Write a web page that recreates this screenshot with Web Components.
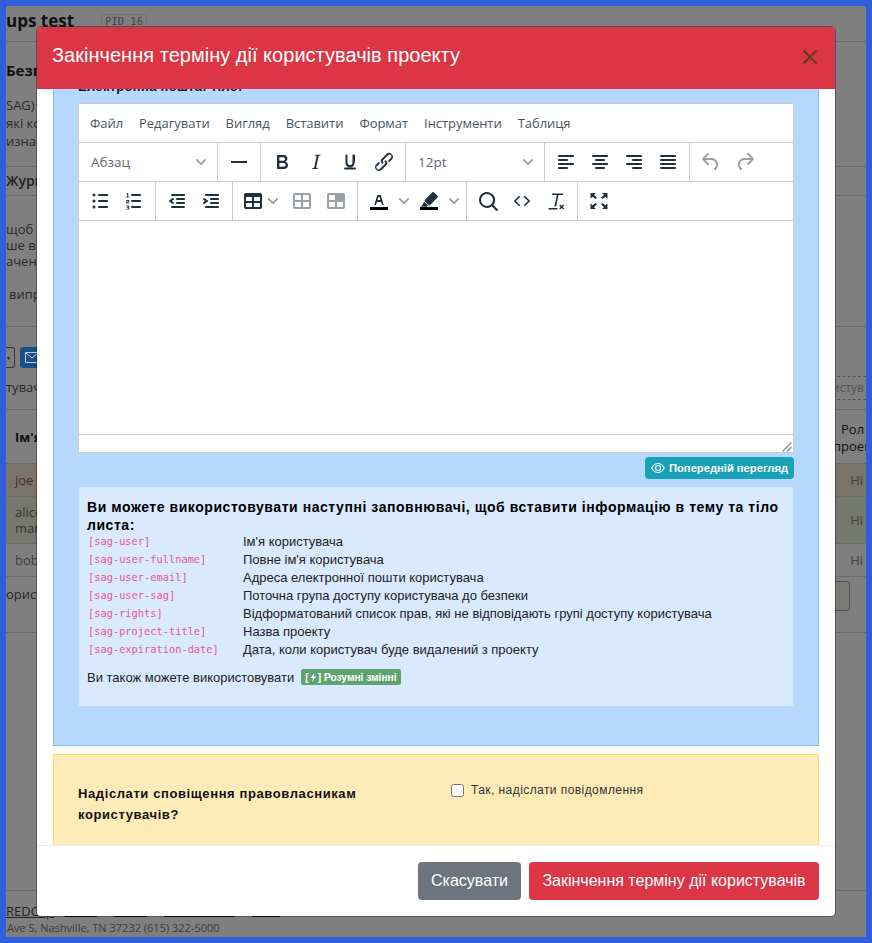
<!DOCTYPE html>
<html lang="uk"><head><meta charset="utf-8"><title>Modal</title>
<style>
html,body{margin:0;height:100%;background:#2f5fdb;overflow:hidden}
body{width:872px;height:943px;position:relative;font-family:"Liberation Sans",Arial,sans-serif}
</style></head><body>
<bg-page></bg-page>
<expire-modal></expire-modal>
<script>
const ICONS={
bold:'<path d="M7.8 19c-.3 0-.5 0-.6-.2l-.2-.5V5.7c0-.2 0-.4.2-.5l.6-.2h5c1.5 0 2.7.3 3.5 1 .7.6 1.1 1.4 1.1 2.5a3 3 0 0 1-.6 1.9c-.4.6-1 1-1.6 1.2.4.1.9.3 1.3.6s.8.7 1 1.2c.4.4.5 1 .5 1.6 0 1.3-.4 2.3-1.3 3-.8.7-2.1 1-3.8 1H7.8zm5-8.3c.6 0 1.2-.1 1.6-.5.4-.3.6-.7.6-1.3 0-1.1-.8-1.7-2.3-1.7H9.3v3.5h3.4zm.5 6c.7 0 1.3-.1 1.7-.4.4-.4.6-.9.6-1.5s-.2-1-.7-1.4c-.4-.3-1-.4-2-.4H9.4v3.8h4z"/>',
italic:'<path d="M16.7 4.7l-.1.9h-.3c-.6 0-1 0-1.4.3-.3.3-.4.6-.5 1.1l-2.1 9.8v.6c0 .5.4.8 1.4.8h.2l-.2.8H8l.2-.8h.2c1.1 0 1.8-.5 2-1.5l2-9.8.1-.5c0-.6-.4-.8-1.4-.8h-.3l.2-.9h5.8z"/>',
underline:'<path d="M16 5c.6 0 1 .4 1 1v5.5a4 4 0 0 1-.4 1.8l-.1.2a4.5 4.5 0 0 1-9 0V6c0-.6.4-1 1-1s1 .4 1 1v7a2.5 2.5 0 0 0 5 0V6c0-.6.4-1 1-1z" transform="translate(0 -.4)"/><path d="M7 17.5h10a1 1 0 0 1 0 2H7a1 1 0 0 1 0-2z"/>',
link:'<path d="M6.2 12.3a1 1 0 0 1 1.4 1.4l-2.1 2a2 2 0 1 0 2.7 2.8l4.8-4.8a1 1 0 0 0 0-1.4 1 1 0 1 1 1.4-1.3 2.9 2.9 0 0 1 0 4L9.6 20a3.9 3.9 0 0 1-5.5-5.5l2-2zm11.6-.6a1 1 0 0 1-1.4-1.4l2-2a2 2 0 1 0-2.6-2.8L11 10.3a1 1 0 0 0 0 1.4A1 1 0 1 1 9.6 13a2.9 2.9 0 0 1 0-4L14.4 4a3.9 3.9 0 0 1 5.5 5.5l-2 2z"/>',
hr:'<path d="M4 11h16v2H4z"/>',
left:'<path d="M5 5h14c.6 0 1 .4 1 1s-.4 1-1 1H5a1 1 0 1 1 0-2zm0 4h8c.6 0 1 .4 1 1s-.4 1-1 1H5a1 1 0 1 1 0-2zm0 8h8c.6 0 1 .4 1 1s-.4 1-1 1H5a1 1 0 0 1 0-2zm0-4h14c.6 0 1 .4 1 1s-.4 1-1 1H5a1 1 0 0 1 0-2z"/>',
center:'<path d="M5 5h14c.6 0 1 .4 1 1s-.4 1-1 1H5a1 1 0 1 1 0-2zm3 4h8c.6 0 1 .4 1 1s-.4 1-1 1H8a1 1 0 1 1 0-2zm0 8h8c.6 0 1 .4 1 1s-.4 1-1 1H8a1 1 0 0 1 0-2zm-3-4h14c.6 0 1 .4 1 1s-.4 1-1 1H5a1 1 0 0 1 0-2z"/>',
right:'<path d="M5 5h14c.6 0 1 .4 1 1s-.4 1-1 1H5a1 1 0 1 1 0-2zm6 4h8c.6 0 1 .4 1 1s-.4 1-1 1h-8a1 1 0 0 1 0-2zm0 8h8c.6 0 1 .4 1 1s-.4 1-1 1h-8a1 1 0 0 1 0-2zm-6-4h14c.6 0 1 .4 1 1s-.4 1-1 1H5a1 1 0 0 1 0-2z"/>',
justify:'<path d="M5 5h14c.6 0 1 .4 1 1s-.4 1-1 1H5a1 1 0 1 1 0-2zm0 4h14c.6 0 1 .4 1 1s-.4 1-1 1H5a1 1 0 1 1 0-2zm0 4h14c.6 0 1 .4 1 1s-.4 1-1 1H5a1 1 0 0 1 0-2zm0 4h14c.6 0 1 .4 1 1s-.4 1-1 1H5a1 1 0 0 1 0-2z"/>',
undo:'<path d="M6.4 8H12c3.7 0 6.2 2 6.8 5.1.6 2.7-.4 5.6-2.3 6.8a1 1 0 0 1-1-1.8c1.1-.6 1.8-2.7 1.4-4.6-.5-2.1-2.1-3.5-4.9-3.5H6.4l3.3 3.3a1 1 0 1 1-1.4 1.4l-5-5a1 1 0 0 1 0-1.4l5-5a1 1 0 0 1 1.4 1.4L6.4 8z"/>',
redo:'<path d="M17.6 10H12c-2.8 0-4.4 1.4-4.9 3.5-.4 2 .3 4 1.4 4.6a1 1 0 1 1-1 1.8c-2-1.2-2.9-4.1-2.3-6.8.6-3 3-5.1 6.8-5.1h5.6l-3.3-3.3a1 1 0 1 1 1.4-1.4l5 5a1 1 0 0 1 0 1.4l-5 5a1 1 0 0 1-1.4-1.4l3.3-3.3z"/>',
ul:'<path d="M11 5h8c.6 0 1 .4 1 1s-.4 1-1 1h-8a1 1 0 0 1 0-2zm0 6h8c.6 0 1 .4 1 1s-.4 1-1 1h-8a1 1 0 0 1 0-2zm0 6h8c.6 0 1 .4 1 1s-.4 1-1 1h-8a1 1 0 0 1 0-2z"/><circle cx="6" cy="6" r="1.5"/><circle cx="6" cy="12" r="1.5"/><circle cx="6" cy="18" r="1.5"/>',
ol:'<path d="M10 17h8c.6 0 1 .4 1 1s-.4 1-1 1h-8a1 1 0 0 1 0-2zm0-6h8c.6 0 1 .4 1 1s-.4 1-1 1h-8a1 1 0 0 1 0-2zm0-6h8c.6 0 1 .4 1 1s-.4 1-1 1h-8a1 1 0 1 1 0-2z"/><path d="M5 4h1.2v3.5H7.200V8.500H4.300V7.500H5.200V5H4.500zM4.300 11h2.900v2.200H5.300v.5h1.900v.8H4.300V12.500H6.200V11.900H4.300zM4.300 16.500h2.900v4H4.300v-.8h1.900v-.8H4.800v-.7h1.400v-.8H4.300z"/>',
outdent:'<path d="M7 5h12c.6 0 1 .4 1 1s-.4 1-1 1H7a1 1 0 1 1 0-2zm5 4h7c.6 0 1 .4 1 1s-.4 1-1 1h-7a1 1 0 0 1 0-2zm0 4h7c.6 0 1 .4 1 1s-.4 1-1 1h-7a1 1 0 0 1 0-2zm-5 4h12a1 1 0 0 1 0 2H7a1 1 0 0 1 0-2zm1.600-3.800a1 1 0 0 1-1.200 1.600l-3-2a1 1 0 0 1 0-1.600l3-2a1 1 0 0 1 1.200 1.600L6.800 12l1.800 1.200z"/>',
indent:'<path d="M7 5h12c.6 0 1 .4 1 1s-.4 1-1 1H7a1 1 0 1 1 0-2zm5 4h7c.6 0 1 .4 1 1s-.4 1-1 1h-7a1 1 0 0 1 0-2zm0 4h7c.6 0 1 .4 1 1s-.4 1-1 1h-7a1 1 0 0 1 0-2zm-5 4h12a1 1 0 0 1 0 2H7a1 1 0 0 1 0-2zm-2.600-3.800L6.200 12l-1.800-1.200a1 1 0 0 1 1.200-1.600l3 2a1 1 0 0 1 0 1.600l-3 2a1 1 0 1 1-1.200-1.600z"/>',
table:'<path d="M19 4a2 2 0 0 1 2 2v12a2 2 0 0 1-2 2H5a2 2 0 0 1-2-2V6c0-1.100.9-2 2-2h14zM5 14v4h6v-4H5zm14 0h-6v4h6v-4zm0-6h-6v4h6V8zM5 12h6V8H5v4z"/>',
cell:'<path fill-rule="evenodd" d="M19 4a2 2 0 0 1 2 2v12a2 2 0 0 1-2 2H5a2 2 0 0 1-2-2V6c0-1.100.9-2 2-2h14zm-8 9H5v5h6v-5zm8 0h-6v5h6v-5zm0-7h-6v5h6V6zm-8 0H5v5h6V6z"/>',
row:'<path fill-rule="evenodd" d="M19 4a2 2 0 0 1 2 2v12a2 2 0 0 1-2 2H5a2 2 0 0 1-2-2V6c0-1.100.9-2 2-2h14zm-8 9H5v5h6v-5zm8 0h-6v5h6v-5zm-8-7H5v5h6V6z"/>',
textcolor:'<path d="M3 18h18v3H3z" fill="#000"/><path d="M8.700 16h-.8a.5.5 0 0 1-.5-.6l2.700-9c.1-.3.3-.4.5-.4h2.800c.2 0 .4.100.5.400l2.700 9a.5.5 0 0 1-.5.600h-.8a.5.5 0 0 1-.4-.4l-.7-2.200c0-.3-.3-.4-.5-.4h-3.400c-.2 0-.4.100-.5.400l-.7 2.200c0 .3-.2.400-.4.400zm2.600-7.600l-.6 2a.5.5 0 0 0 .5.600h1.600a.5.5 0 0 0 .5-.6l-.6-2c0-.3-.3-.4-.5-.4h-.4c-.2 0-.4.100-.5.400z"/>',
highlight:'<path d="M3 18h18v3H3z" fill="#000"/><path d="M15.500 3.300c.5-.4 1.200-.4 1.600.100l3.400 3.400c.5.500.5 1.200 0 1.700L13.200 16c-.5.5-1.200.5-1.700 0L8 12.500c-.5-.5-.5-1.200 0-1.700zM7.300 12.800l3.800 3.800-1.200 1.100H4.200z"/>',
search:'<path d="M16 17.300a8 8 0 1 1 1.400-1.400l4.300 4.400a1 1 0 0 1-1.400 1.400l-4.400-4.300zm-5-.3a6 6 0 1 0 0-12 6 6 0 0 0 0 12z"/>',
code:'<path d="M9.800 15.700c.3.300.3.800 0 1-.3.400-.9.400-1.200 0l-4.400-4.100a.8.800 0 0 1 0-1.200l4.400-4.200c.3-.3.900-.3 1.200 0 .3.300.3.800 0 1.100L6 12l3.800 3.700zm4.400 0l3.800-3.700-3.800-3.700a.8.800 0 0 1 0-1.100c.3-.3.900-.3 1.200 0l4.400 4.200c.3.300.3.900 0 1.200l-4.400 4.100c-.3.400-.9.400-1.200 0a.8.800 0 0 1 0-1z"/>',
clear:'<path d="M8 4.500h11v1.600h-4.500l-2.400 11.400h-1.700L12.800 6.100H8zM4.500 19h9v1.500h-9zM16.200 15.600l1.500 1.500 1.500-1.500 1 1-1.500 1.500 1.500 1.500-1 1-1.500-1.500-1.500 1.500-1-1 1.500-1.500-1.500-1.500z"/>',
full:'<path d="M15.300 10l-1.200-1.300 2.900-3L15 4.100h5.500v5.600l-1.900-2-3.300 2.300zm-6.600 0L5.400 7.700l-1.900 2V4.100H9L7 5.700l2.900 3L8.700 10zm6.600 4l3.300 2.300 1.900-2v5.600H15l2-1.600-2.900-3 1.200-1.300zm-6.600 0l1.200 1.300-2.900 3 2 1.600H3.500v-5.600l1.900 2L8.700 14z"/>'
};
const chev='<svg class="chev" width="10" height="10" viewBox="0 0 10 10"><path d="M8.700 2.200c.3-.3.800-.3 1 0 .4.400.4.900 0 1.200L5.700 7.800c-.3.300-.9.300-1.200 0L.2 3.400a.8.8 0 0 1 0-1.200c.3-.3.800-.3 1.100 0L5 6l3.700-3.800z"/></svg>';

class TbBtn extends HTMLElement{
  connectedCallback(){
    const s=this.attachShadow({mode:'open'});
    const off=this.hasAttribute('off');
    const split=this.getAttribute('split');
    s.innerHTML=`<style>
    :host{display:flex;align-items:center;justify-content:${split?'flex-start':'center'};width:${split?split+'px':'34px'};height:38px;box-sizing:border-box;padding-left:${split?(this.getAttribute('pad')||5)+'px':'0'}}
    svg.i{fill:${off?'#9aa0a5':'#222f3e'};display:block;flex:none}
    .chev{fill:#8f99a3;margin-left:${this.getAttribute('gap')||'8'}px;flex:none}
    </style><svg class="i" width="24" height="24" viewBox="0 0 24 24">${ICONS[this.getAttribute('icon')]}</svg>${split?chev:''}`;
  }
}
customElements.define('tb-btn',TbBtn);

class TbSelect extends HTMLElement{
  connectedCallback(){
    this.attachShadow({mode:'open'}).innerHTML=`<style>
    :host{display:flex;align-items:center;justify-content:space-between;width:130px;height:38px;box-sizing:border-box;padding:0 7px 0 8px;font:13.500px "Open Sans",sans-serif;color:#5f6670}
    .chev{fill:#8f99a3}
    </style><span><slot></slot></span>${chev}`;
  }
}
customElements.define('tb-select',TbSelect);

class TbGroup extends HTMLElement{
  connectedCallback(){
    this.attachShadow({mode:'open'}).innerHTML=`<style>
    :host{display:flex;padding:0 4px;border-right:1px solid #ccc;height:38px}
    :host([last]){border-right:0}
    </style><slot></slot>`;
  }
}
customElements.define('tb-group',TbGroup);

class RichEditor extends HTMLElement{
  constructor(){super();
    const menu=['Файл','Редагувати','Вигляд','Вставити','Формат','Інструменти','Таблиця'];
    this.attachShadow({mode:'open'}).innerHTML=`<style>
    :host{display:block;height:350px;box-sizing:border-box;border:1px solid #ccc;background:#fff;font-family:"Open Sans",sans-serif}
    .menu{display:flex;height:38px;align-items:center;padding-left:3px;border-bottom:1px solid #ccc;font-size:13px;letter-spacing:-.05px;color:#4a5560}
    .menu span{padding:0 8px}
    .bar{display:flex;height:38px;border-bottom:1px solid #ccc}
    .content{height:213px;border-bottom:1px solid #ccc}
    .status{height:17px;display:flex;justify-content:flex-end;align-items:flex-end}
    .status svg{display:block;margin-right:1px}
    </style>
    <div class="menu">${menu.map(m=>`<span>${m}</span>`).join('')}</div>
    <div class="bar">
      <tb-group><tb-select>Абзац</tb-select></tb-group>
      <tb-group><tb-btn icon="hr"></tb-btn></tb-group>
      <tb-group><tb-btn icon="bold"></tb-btn><tb-btn icon="italic"></tb-btn><tb-btn icon="underline"></tb-btn><tb-btn icon="link"></tb-btn></tb-group>
      <tb-group><tb-select>12pt</tb-select></tb-group>
      <tb-group><tb-btn icon="left"></tb-btn><tb-btn icon="center"></tb-btn><tb-btn icon="right"></tb-btn><tb-btn icon="justify"></tb-btn></tb-group>
      <tb-group last><tb-btn icon="undo" off></tb-btn><tb-btn icon="redo" off></tb-btn></tb-group>
    </div>
    <div class="bar">
      <tb-group><tb-btn icon="ul"></tb-btn><tb-btn icon="ol"></tb-btn></tb-group>
      <tb-group><tb-btn icon="outdent"></tb-btn><tb-btn icon="indent"></tb-btn></tb-group>
      <tb-group><tb-btn icon="table" split="48" pad="4" gap="3"></tb-btn><tb-btn icon="cell" off></tb-btn><tb-btn icon="row" off></tb-btn></tb-group>
      <tb-group><tb-btn icon="textcolor" split="50"></tb-btn><tb-btn icon="highlight" split="50"></tb-btn></tb-group>
      <tb-group><tb-btn icon="search"></tb-btn><tb-btn icon="code"></tb-btn><tb-btn icon="clear"></tb-btn></tb-group>
      <tb-group last><tb-btn icon="full"></tb-btn></tb-group>
    </div>
    <div class="content"></div>
    <div class="status"><svg width="10" height="10" viewBox="0 0 10 10" stroke="#7d858c" stroke-width="1.100" fill="none"><path d="M.5 9.500 9.500.5M5 9.500 9.500 5"/></svg></div>`;
  }
}
customElements.define('rich-editor',RichEditor);

class PlaceholderBox extends HTMLElement{
  constructor(){super();
    const rows=[['[sag-user]',"Ім'я користувача"],['[sag-user-fullname]',"Повне ім'я користувача"],['[sag-user-email]','Адреса електронної пошти користувача'],['[sag-user-sag]','Поточна група доступу користувача до безпеки'],['[sag-rights]','Відформатований список прав, які не відповідають групі доступу користувача'],['[sag-project-title]','Назва проекту'],['[sag-expiration-date]','Дата, коли користувач буде видалений з проекту']];
    this.attachShadow({mode:'open'}).innerHTML=`<style>
    :host{display:block;margin:0 1px;height:219px;box-sizing:border-box;padding:11px 8px 0;background:#d9e9fe;color:#222;font-size:13px}
    h4{margin:0 0 -2px;font:bold 14px/18px "Liberation Sans",sans-serif;color:#000;letter-spacing:.55px}
    .row{display:grid;grid-template-columns:156px 1fr;height:18px;align-items:center}
    code{font:10.350px "DejaVu Sans Mono",monospace;color:#e8578f;margin-left:1px}
    .also{margin-top:10px;display:flex;align-items:center;height:18px}
    .badge{margin-left:7px;display:inline-flex;align-items:center;height:16px;padding:0 4px;background:#5fa46f;color:#fff;border-radius:2px;font:bold 10.200px "Liberation Sans",sans-serif}
    .badge svg{margin:0 1px}
    </style>
    <h4>Ви можете використовувати наступні заповнювачі, щоб вставити інформацію в тему та тіло листа:</h4>
    ${rows.map(r=>`<div class="row"><code>${r[0]}</code><span>${r[1]}</span></div>`).join('')}
    <div class="also"><span>Ви також можете використовувати</span><span class="badge">[<svg width="7" height="9" viewBox="0 0 7 9" fill="#fff"><path d="M4.200 0 .6 5h2.300L2.200 9l4-5.500H4z"/></svg>] Розумні змінні</span></div>`;
  }
}
customElements.define('placeholder-box',PlaceholderBox);

class ActBtn extends HTMLElement{
  connectedCallback(){
    const bg=this.getAttribute('bg');
    const w=this.getAttribute('w');
    this.attachShadow({mode:'open'}).innerHTML=`<style>
    :host{display:flex;align-items:center;justify-content:center;height:38px;width:${w}px;border-radius:4px;background:${bg};color:#fff;font:16px "Liberation Sans",sans-serif}
    </style><slot></slot>`;
  }
}
customElements.define('act-btn',ActBtn);

class ExpireModal extends HTMLElement{
  constructor(){super();
    this.attachShadow({mode:'open'}).innerHTML=`<style>
    :host{position:absolute;left:37px;top:27px;width:798px;height:889px;display:flex;flex-direction:column;background:#fff;border-radius:4px;overflow:hidden;box-shadow:0 0 0 1px rgba(0,0,0,.35);font-family:"Liberation Sans",sans-serif}
    header{height:62px;flex:none;background:#dc3545;color:#fff;display:flex;align-items:center;justify-content:space-between;padding:0 17px 0 15px;position:relative;z-index:1}
    h2{margin:0;font:20px/24px "Liberation Sans",sans-serif;position:relative;top:-3px;letter-spacing:.02px}
    .body{flex:1;min-height:0;overflow:hidden;padding:0 16px}
    .blue{margin-top:-20px;height:677px;box-sizing:border-box;background:#b6d7fe;border:1px solid #86bcf6;border-top:0;padding:8px 24px 0}
    .lbl{font:bold 13px/20px "Liberation Sans",sans-serif;color:#111;margin-bottom:6px;letter-spacing:.3px}
    .prev{display:flex;justify-content:flex-end;margin:4px 0 8px}
    .pbtn{display:flex;align-items:center;gap:4px;width:149px;height:22px;box-sizing:border-box;padding-left:6px;background:#17a2b8;border-radius:4px;color:#fff;font:bold 11.200px "Liberation Sans",sans-serif}
    .yellow{margin-top:8px;height:110px;box-sizing:border-box;background:#feebb8;border:1px solid #ffd76d;display:grid;grid-template-columns:373px 1fr;padding:28px 24px 0}
    .q{font:bold 13px/21px "Liberation Sans",sans-serif;color:#111;letter-spacing:.6px;width:320px}
    .chk{display:flex;align-items:flex-start;font:12px/16px "Liberation Sans",sans-serif;color:#333;letter-spacing:.43px;margin-top:-1px}
    .chk i{width:11px;height:11px;border:1px solid #767676;border-radius:2.500px;background:#fff;margin:2px 7px 0 0;display:block;flex:none}
    footer{height:71px;flex:none;box-sizing:border-box;border-top:1px solid #e9ecef;display:flex;justify-content:flex-end;align-items:center;gap:8px;padding:0 16px}
    </style>
    <header><h2>Закінчення терміну дії користувачів проекту</h2>
      <svg width="16" height="16" viewBox="0 0 16 16" stroke="#5c3a1e" stroke-width="1.800" fill="none" style="position:relative;top:-1px"><path d="M1.500 1.500l13 13M14.500 1.500l-13 13"/></svg></header>
    <div class="body">
      <div class="blue">
        <div class="lbl">Електронна пошта: тіло:</div>
        <rich-editor></rich-editor>
        <div class="prev"><div class="pbtn"><svg width="14" height="12" viewBox="0 0 14 12" fill="none" stroke="#fff" stroke-width="1.100"><path d="M.8 6C2.200 3 4.500 1.500 7 1.500S11.800 3 13.200 6C11.800 9 9.500 10.500 7 10.500S2.200 9 .8 6z"/><circle cx="7" cy="6" r="2.500"/></svg><span>Попередній перегляд</span></div></div>
        <placeholder-box></placeholder-box>
      </div>
      <div class="yellow">
        <div class="q">Надіслати сповіщення правовласникам користувачів?</div>
        <div class="chk"><i></i><span>Так, надіслати повідомлення</span></div>
      </div>
    </div>
    <footer><act-btn bg="#6c757d" w="103">Скасувати</act-btn><act-btn bg="#dc3545" w="290">Закінчення терміну дії користувачів</act-btn></footer>`;
  }
}
customElements.define('expire-modal',ExpireModal);

class BgPage extends HTMLElement{
  constructor(){super();
    this.attachShadow({mode:'open'}).innerHTML=`<style>
    :host{position:absolute;left:6px;top:6px;width:860px;height:931px;background:#7f7f7f;overflow:hidden;font:13px/16px "Open Sans",sans-serif;color:#2a2a2a;display:block}
    .r{display:flex;justify-content:space-between;align-items:center;box-sizing:border-box}
    .line{border-bottom:1px solid #696969}
    b{color:#111}
    .t{height:36px;align-items:flex-start;padding-top:5px}
    .t b{font-size:17px;line-height:20px}
    .pid{display:inline-block;margin-left:27px;border:1px solid #747474;border-radius:3px;padding:0 3px;font:10.500px/13px "DejaVu Sans Mono",monospace;color:#444;position:relative;top:-1px;vertical-align:top;margin-top:4px}
    .btns{display:flex;gap:5px;height:21px;margin:20px 0 0 -6px}
    .b1{width:15px;border:1px solid #333;border-radius:0 3px 3px 0;border-left:0;box-sizing:border-box;display:flex;align-items:center;justify-content:flex-end;padding-right:4px;color:#222;font-size:6px}
    .b2{width:40px;background:#1a4f87;border-radius:3px;display:flex;align-items:center;padding-left:5px;box-sizing:border-box}
    .dash{width:34px;height:24px;border-top:1px dashed #555;border-bottom:1px dashed #555;font-size:12px;line-height:22px;color:#555;box-sizing:border-box;white-space:nowrap;overflow:hidden}
    .row{padding:0 3px 0 9px;border-bottom:1px solid #6c6c6c;color:#3e3e3e}
    .foot{display:flex;align-items:flex-start;height:27px;padding-top:12px;box-sizing:border-box;color:#222}
    .foot u{display:block;height:1px;background:#111;margin:13px 17px 0 0;flex:none}
    </style>
    <div class="r t line"><span><b>ups test</b><span class="pid">PID 16</span></span></div>
    <div style="padding-top:20px;height:24px"><b style="font-size:15px">Безп</b></div>
    <div style="margin-top:10px;height:70px;line-height:18px">SAG)<br>які ко<br>изнач</div>
    <div class="line" style="height:0"></div>
    <div class="r line" style="height:29px;align-items:flex-start;padding-top:6px"><b style="font-weight:600;font-size:14px;color:#222">Журн</b></div>
    <div style="margin-top:25px;height:105px;line-height:16px">щоб в<br>ше вм<br>аченн<br><div style="margin:17px 0 0 3px">випр</div></div>
    <div class="line" style="height:0"></div>
    <div class="btns"><div class="b1">▾</div><div class="b2"><svg width="14" height="11" viewBox="0 0 14 11" fill="none" stroke="#bcd"><path d="M.5.5h13v10H.5zM.5.5 7 6l6.500-5.500"/></svg></div></div>
    <div class="r line" style="height:34px;margin-top:8px;align-items:flex-start"><span style="margin-top:3px">тувачі</span><div class="dash">истув</div></div>
    <div class="r line" style="height:54px;padding:0 0 0 9px;align-items:flex-start"><b style="margin-top:19px">Ім'я</b><b style="line-height:17px;font-weight:400;margin-top:11px;width:25px;color:#111;white-space:nowrap">Рол<br><span style="margin-left:-8px">проек</span></b></div>
    <div class="r row" style="height:33px;background:#7a746a"><span style="color:#333">joe</span><span>Hi</span></div>
    <div class="r row" style="height:47px;background:#75786f"><span style="line-height:16px;color:#333">alice<br>mar</span><span>Hi</span></div>
    <div class="r row" style="height:33px"><span>bob</span><span>Hi</span></div>
    <div class="r" style="height:55px;align-items:flex-start"><span style="margin-top:9px">ористу</span><span style="width:15px;height:30px;border:1px solid #4f4f4f;border-left:0;border-radius:0 3px 3px 0;box-sizing:border-box;margin:4px 16px 0 0;background:#7c7c76"></span></div>
    <div class="line" style="height:0"></div>
    <div class="line" style="height:257px"></div>
    <div class="foot"><span style="text-decoration:underline;width:59px;flex:none;line-height:16px">REDCap</span><u style="width:32px"></u><u style="width:33px"></u><u style="width:70px;margin-right:18px"></u><u style="width:28px"></u></div>
    <div style="margin:2px 0 0 1px;font-size:11px;color:#3c3c3c">Ave S, Nashville, TN 37232 (615) 322-5000</div>`;
  }
}
customElements.define('bg-page',BgPage);
</script>
</body></html>
